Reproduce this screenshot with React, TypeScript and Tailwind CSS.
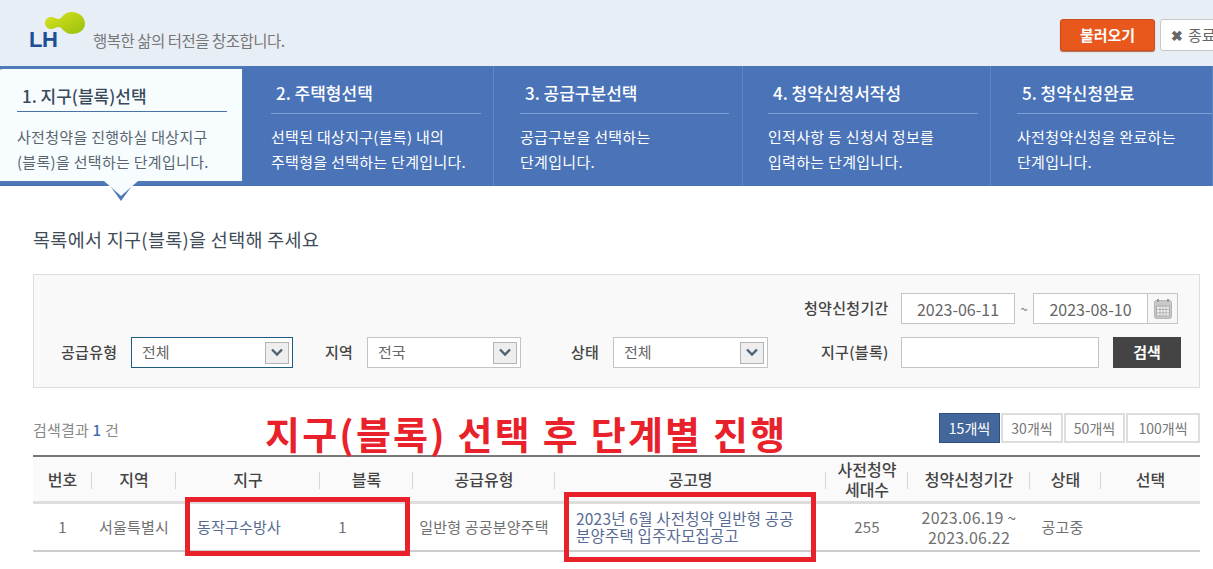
const font = "font-['Noto_Sans_CJK_KR','Noto_Sans',sans-serif]";

const steps = [
  { title: "2. 주택형선택", desc: ["선택된 대상지구(블록) 내의", "주택형을 선택하는 단계입니다."], box: "w-[251px] pl-[28px] pr-[12px]" },
  { title: "3. 공급구분선택", desc: ["공급구분을 선택하는", "단계입니다."], box: "w-[249px] pl-[26px] pr-[13px]" },
  { title: "4. 청약신청서작성", desc: ["인적사항 등 신청서 정보를", "입력하는 단계입니다."], box: "w-[248px] pl-[25px] pr-[12px]" },
  { title: "5. 청약신청완료", desc: ["사전청약신청을 완료하는", "단계입니다."], box: "w-[222px] pl-[26px]" },
];

const columns = [
  { label: "번호", width: "w-[59px]" },
  { label: "지역", width: "w-[84px]" },
  { label: "지구", width: "w-[144px]" },
  { label: "블록", width: "w-[93px]" },
  { label: "공급유형", width: "w-[142px]" },
  { label: "공고명", width: "w-[271px]" },
  { label: "사전청약\n세대수", width: "w-[82px]" },
  { label: "청약신청기간", width: "w-[122px]" },
  { label: "상태", width: "w-[71px]" },
  { label: "선택", width: "w-[99px]" },
];

const labelText = "text-[15px] tracking-[0.3px] font-medium text-[#444] whitespace-nowrap";

function SelectBox({ value, width, focus }: { value: string; width: string; focus?: boolean }) {
  return (
    <div className={`${width} h-[31px] flex items-center justify-between pl-[10px] pr-[3px] bg-white border ${focus ? "border-[#1d5c7f]" : "border-[#c4c4c4]"}`}>
      <span className="text-[15px] text-[#666]">{value}</span>
      <span className="w-[24px] h-[22px] flex items-center justify-center bg-[#eeeeee] border border-[#b4b4b4]">
        <svg width="14" height="9" viewBox="0 0 14 9">
          <path d="M2 1.5 L7 6.5 L12 1.5" fill="none" stroke="#4f6272" strokeWidth="2.4" />
        </svg>
      </span>
    </div>
  );
}

function DateBox({ value, width }: { value: string; width: string }) {
  return (
    <div className={`${width} h-[31px] flex items-center justify-center bg-white border border-[#c4c4c4] text-[16px] text-[#666]`}>
      {value}
    </div>
  );
}

function CalendarIcon() {
  return (
    <svg width="18" height="20" viewBox="0 0 18 20">
      <rect x="0.5" y="1.5" width="17" height="18" rx="2" fill="#c9c9c9" stroke="#b5b5b5" />
      <rect x="3" y="0" width="2" height="3" fill="#999" />
      <rect x="13" y="0" width="2" height="3" fill="#999" />
      <rect x="2.5" y="7" width="13" height="10" fill="#eeeeee" stroke="#aaa" />
      <path d="M2.5 10.5H15.5M2.5 13.8H15.5M6 7V17M9 7V17M12 7V17" stroke="#aaa" strokeWidth="0.8" />
    </svg>
  );
}

function PageSize({ label, width, active }: { label: string; width: string; active?: boolean }) {
  return (
    <span className={`${width} h-[30px] flex items-center justify-center text-[14px] ${active ? "bg-[#44679b] border border-[#2f4f80] text-white" : "bg-white border-2 border-[#dddddd] text-[#777]"}`}>
      {label}
    </span>
  );
}

export default function App() {
  return (
    <div className={`relative w-[1213px] h-[569px] overflow-hidden bg-white ${font}`}>
      {/* header */}
      <div className="h-[66px] bg-[#e8eef6] flex items-start justify-between">
        <div className="flex items-end pl-[29px] pt-[12px]">
          <div className="relative w-[56px] h-[36px]">
            <svg className="absolute left-[15px] top-0" width="41" height="23" viewBox="0 0 41 23">
              <defs>
                <linearGradient id="leaf" x1="0" y1="0" x2="1" y2="1">
                  <stop offset="0" stopColor="#dbe41e" />
                  <stop offset="1" stopColor="#98c00c" />
                </linearGradient>
              </defs>
              <path d="M1 11 C1 7.5 4 5 7 5 C10 5 12 7 15 7 C18 7 19 0 28 0 C35 0 41 5 41 11.5 C41 18 35 22 28 22 C20 22 18 15 15 15 C12 15 10 17 7 17 C4 17 1 14.5 1 11 Z" fill="url(#leaf)" />
            </svg>
            <span className="absolute left-0 bottom-0 font-['Liberation_Sans',sans-serif] font-bold text-[22px] leading-[16px] tracking-[-0.5px] text-[#1c4f94]">LH</span>
          </div>
          <span className="ml-[8px] text-[15.5px] leading-[16px] tracking-[-0.5px] text-[#777]">행복한 삶의 터전을 창조합니다.</span>
        </div>
        <div className="flex items-center gap-[5px] pt-[19px] shrink-0 translate-x-[42px]">
          <button className="w-[95px] h-[32px] rounded-[3px] bg-[#e8581c] border border-[#c9501e] shadow-[0_1px_1px_#b0674a] text-white text-[15px] font-bold">불러오기</button>
          <button className="w-[95px] h-[32px] rounded-[3px] bg-white border border-[#c8c8c8] text-[#666] text-[15px] flex items-center pl-[10px] gap-[5px]">
            <span className="text-[14px] font-black text-[#666]">✖</span>
            <span>종료</span>
          </button>
        </div>
      </div>

      {/* steps */}
      <div className="relative h-[120px] flex bg-[#4a73b8]">
        <div className="w-[243px] h-[118px] pl-[17px] pr-[15px] pt-[3px] bg-[#f7fcff] border-t-[3px] border-b-[3px] border-r border-[#5079b8] rounded-tl-[4px] shrink-0">
          <div className="h-[40px] flex items-center pl-[5px] pt-[8px] border-b border-[#4a73a8] text-[17px] font-medium text-[#3a4a5a] whitespace-nowrap">1. 지구(블록)선택</div>
          <div className="pt-[12px] text-[15px] tracking-[0.3px] leading-[25px] text-[#5a6570] whitespace-nowrap">
            <p>사전청약을 진행하실 대상지구</p>
            <p>(블록)을 선택하는 단계입니다.</p>
          </div>
        </div>
        {steps.map((step) => (
          <div key={step.title} className={`${step.box} h-[120px] border-r border-[#5f85c2] shrink-0 text-white`}>
            <div className="h-[48px] flex items-center pl-[5px] pt-[6px] border-b border-[#7d9fd6] text-[17px] font-medium whitespace-nowrap">{step.title}</div>
            <div className="pt-[10px] text-[15px] tracking-[0.3px] leading-[25px] whitespace-nowrap">
              {step.desc.map((line) => (
                <p key={line}>{line}</p>
              ))}
            </div>
          </div>
        ))}
        <svg className="absolute left-[104px] top-[115px]" width="34" height="21" viewBox="0 0 34 21">
          <path d="M0 0 H34 V2 H30 L17 20 L4 2 H0 Z" fill="#5079b8" />
          <path d="M0 0 H34 L17 15 Z" fill="#f7fcff" />
        </svg>
      </div>

      {/* content */}
      <div className="px-[33px] w-[1199px] box-content">
        <h2 className="mt-[41px] h-[24px] leading-[24px] text-[18.5px] tracking-[0.3px] text-[#3f4c58]">목록에서 지구(블록)을 선택해 주세요</h2>

        <div className="mt-[23px] w-[1167px] h-[114px] bg-[#f9f9f9] border border-[#dddddd] relative">
          <div className="pt-[18px] flex items-center">
            <span className={`ml-[770px] w-[84px] text-right ${labelText}`}>청약신청기간</span>
            <div className="ml-[13px]"><DateBox value="2023-06-11" width="w-[114px]" /></div>
            <span className="w-[18px] text-center text-[13px] text-[#777]">~</span>
            <DateBox value="2023-08-10" width="w-[115px]" />
            <div className="w-[31px] h-[31px] -ml-px flex items-center justify-center border border-[#c4c4c4] bg-[#f7f7f7]">
              <CalendarIcon />
            </div>
          </div>
          <div className="mt-[13px] flex items-center">
            <span className={`ml-[27px] w-[56px] text-right ${labelText}`}>공급유형</span>
            <div className="ml-[14px]"><SelectBox value="전체" width="w-[162px]" focus /></div>
            <span className={`ml-[32px] w-[28px] ${labelText}`}>지역</span>
            <div className="ml-[14px]"><SelectBox value="전국" width="w-[154px]" /></div>
            <span className={`ml-[50px] w-[28px] ${labelText}`}>상태</span>
            <div className="ml-[14px]"><SelectBox value="전체" width="w-[155px]" /></div>
            <span className={`ml-[53px] w-[67px] text-right ${labelText}`}>지구(블록)</span>
            <div className="ml-[13px] w-[198px] h-[31px] bg-white border border-[#c4c4c4]" />
            <button className="ml-[14px] w-[68px] h-[31px] bg-[#444444] text-white text-[15px] font-bold">검색</button>
          </div>
        </div>

        <div className="mt-[25px] h-[32px] w-[1167px] flex items-start justify-between relative">
          <span className="mt-[6px] text-[15px] tracking-[0.2px] text-[#888]">검색결과 <span className="text-[#3d6fb4] font-medium">1</span> 건</span>
          <div className="flex gap-[1px]">
            <PageSize label="15개씩" width="w-[61px]" active />
            <PageSize label="30개씩" width="w-[62px]" />
            <PageSize label="50개씩" width="w-[61px]" />
            <PageSize label="100개씩" width="w-[74px]" />
          </div>
        </div>

        <table className="mt-[10px] w-[1167px] table-fixed border-t-2 border-[#777777] border-separate border-spacing-0">
          <thead>
            <tr className="h-[47px] bg-[#fafafa]">
              {columns.map((col, i) => (
                <th key={col.label} className={`${col.width} p-0 border-b-[3px] border-[#dddddd] text-[16px] leading-[20px] font-medium text-[#444] whitespace-pre-line relative`}>
                  {col.label}
                  {i < columns.length - 1 && <span className="absolute right-0 top-[15px] h-[17px] w-px bg-[#d5d5d5]" />}
                </th>
              ))}
            </tr>
          </thead>
          <tbody>
            <tr className="h-[48px] text-[15px] tracking-[0.2px] text-[#707070] text-center">
              <td className="p-0 border-b-2 border-[#cccccc]">1</td>
              <td className="p-0 border-b-2 border-[#cccccc] whitespace-nowrap">서울특별시</td>
              <td className="p-0 pl-[21px] text-left text-[#566a94] border-b-2 border-[#cccccc]">동작구수방사</td>
              <td className="p-0 border-b-2 border-[#cccccc]">
                <span className="-ml-[48px]">1</span>
              </td>
              <td className="p-0 border-b-2 border-[#cccccc] whitespace-nowrap">일반형 공공분양주택</td>
              <td className="p-0 pl-[21px] text-left text-[15.5px] text-[#566a94] leading-[17px] border-b-2 border-[#cccccc] whitespace-nowrap">
                2023년 6월 사전청약 일반형 공공<br />분양주택 입주자모집공고
              </td>
              <td className="p-0 border-b-2 border-[#cccccc]">255</td>
              <td className="p-0 text-[16px] leading-[20px] border-b-2 border-[#cccccc]">2023.06.19 ~<br />2023.06.22</td>
              <td className="p-0 pr-[6px] border-b-2 border-[#cccccc]">공고중</td>
              <td className="p-0 border-b-2 border-[#cccccc]"></td>
            </tr>
          </tbody>
        </table>
      </div>

      {/* red annotations pasted on top of the capture */}
      <div className="absolute left-[265px] top-[410px] text-[38px] leading-[46px] font-bold tracking-[2.2px] whitespace-nowrap text-[#e8212b]">지구(블록) 선택 후 단계별 진행</div>
      <div className="absolute left-[185px] top-[497px] w-[225px] h-[59px] border-[5px] border-[#e8212b]" />
      <div className="absolute left-[564px] top-[492px] w-[252px] h-[70px] border-[5px] border-[#e8212b]" />
    </div>
  );
}
